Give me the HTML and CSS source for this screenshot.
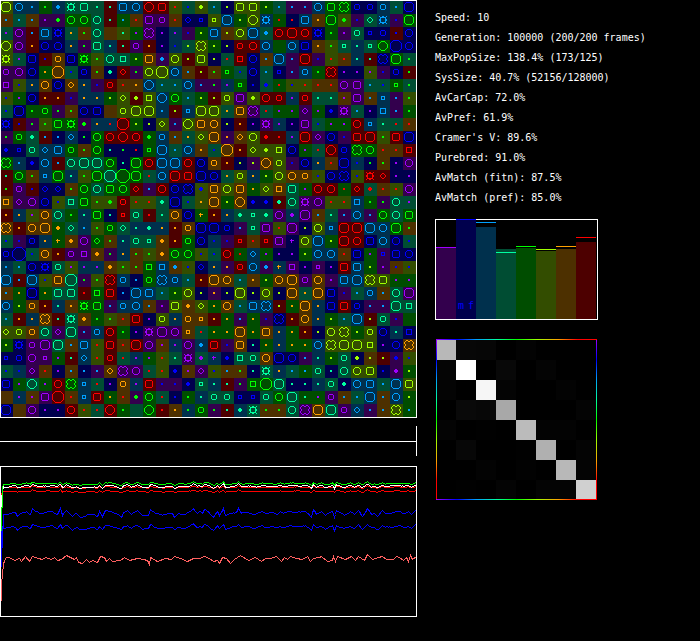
FILE: index.html
```html
<!DOCTYPE html>
<html lang="en">
<head>
<meta charset="utf-8">
<title>Population simulation</title>
<link rel="stylesheet" href="styles.css">
</head>
<body>
<main class="app">
  <div class="world">
    <svg class="field" id="field" viewBox="0 0 417 418" role="img" aria-label="Population grid"></svg>
    <svg class="strip" viewBox="0 0 417 30" aria-hidden="true"><path d="M0 15.5H417M416.5 0V30"/></svg>
    <svg class="history" id="history" viewBox="0 0 417 151" role="img" aria-label="History"></svg>
  </div>
  <aside class="side">
    <ul class="stats">
      <li>Speed: 10</li>
      <li>Generation: 100000 (200/200 frames)</li>
      <li>MaxPopSize: 138.4% (173/125)</li>
      <li>SysSize: 40.7% (52156/128000)</li>
      <li>AvCarCap: 72.0%</li>
      <li>AvPref: 61.9%</li>
      <li>Cramer's V: 89.6%</li>
      <li>Purebred: 91.0%</li>
      <li>AvMatch (fitn): 87.5%</li>
      <li>AvMatch (pref): 85.0%</li>
    </ul>
    <div class="bars">
      <svg class="bars-plot" id="bars" viewBox="0 0 163 101" aria-hidden="true"></svg>
      <div class="sexes"><span>m</span><span>f</span></div>
    </div>
    <div class="matrix" id="matrix"></div>
  </aside>
</main>
<script src="main.js"></script>
</body>
</html>
```
FILE: styles.css
```css
* { box-sizing: border-box; }

body {
  margin: 0;
  background: #000;
  color: #fff;
  font: 10px/20px "DejaVu Sans Mono", "Liberation Mono", monospace;
}

.app {
  display: grid;
  grid-template-columns: 417fr 283fr;
  align-items: start;
}

.world { display: flex; flex-direction: column; }

svg { display: block; width: 100%; shape-rendering: crispEdges; }

.strip { margin: 8px 0 10px; stroke: #fff; }

.history path, .history rect { fill: none; }

.side { padding: 8px 0 0 18px; }

.stats {
  margin: 0 0 11px;
  padding: 0;
  list-style: none;
  white-space: nowrap;
}

.bars { position: relative; width: 163px; margin-bottom: 19px; }

.sexes {
  position: absolute;
  left: 21px;
  bottom: 4px;
  display: flex;
  color: #00f;
}

.sexes span { width: 10px; text-align: center; }

.matrix {
  --hues: #a000ff, #00f 13%, #00a0ff 25%, #00ffa0 38%, #0f0 50%, #a0ff00 63%, #ffa000 76%, #f00 88%;
  position: relative;
  display: grid;
  grid-template-columns: repeat(8, 20px);
  grid-auto-rows: 20px;
  width: 161px;
  margin-left: 1px;
  padding-top: 1px;
}

.matrix::after {
  content: "";
  position: absolute;
  inset: 0;
  background:
    linear-gradient(to right, var(--hues)) top / 100% 1px no-repeat,
    linear-gradient(to right, var(--hues)) bottom / 100% 1px no-repeat,
    linear-gradient(var(--hues)) left / 1px 100% no-repeat,
    linear-gradient(var(--hues)) right / 1px 100% no-repeat;
}
```
FILE: main.js
```js
const BRIGHT = { P: '#a000ff', B: '#0000ff', C: '#00a0ff', T: '#00ffa0', G: '#00ff00', L: '#a0ff00', O: '#ffa000', R: '#ff0000' };
const DARK = { P: '#33004d', B: '#00004d', C: '#00304d', T: '#004d33', G: '#004d00', L: '#334d00', O: '#4d3000', R: '#4d0000' };

// Each cell: background hue, organism hue, body shape.
const CELLS = `
LL7 CC5 CC1 GG1 CC2 TTw TTr TT1 RT1 CCr CC5 RRe RRr LR1 TB1 LL2 TC1 BL1 LLr LLr GL1 TC1 PC1 PC1 CC5 GGr GGv BB4 BB4 CC4 TC1 BB7
OC1 TC1 OC1 PP1 PG2 GG6 GG6 TT6 RT1 GC1 OR1 PPr PP4 OR1 BBd BBs LLs CC7 GL1 LLe CCw GR1 BR1 CCr OO1 GG7 LG2 PB1 TTd CCw PB1 GG7
TP1 PP6 RC1 CCr BBw TO1 OG1 TT6 O-0 LT1 GP1 PPv BP1 CP1 PB1 GL1 CCr OL1 LL6 CC7 TC2 RR6 RR7 RR6 BBw GG1 PP1 TT4 BBs BB4 RB1 BB5
LLe PP6 RO1 BB6 BB6 CO1 PG1 TTr CT1 RT1 PP4 RO1 BP1 CB1 TL1 LLv GL1 BL1 RR4 RR5 CC6 G-0 CC6 BBr OO1 LG1 TTs CT1 TTs GGe BB8 BB5
LLw TP1 BBr RB1 OO4 BBr GGw LG1 TT6 TTq GL1 OOr PC2 LL6 RL1 LLr BL1 TR1 RRq BB6 OC1 CC7 PC1 RR7 PB1 LR1 OR1 CT1 RT1 BBv GG7 TG1
PP4 PP5 BB6 GO1 OO8 TB1 BB4 OG1 BT2 RRd PG1 LL5 LL8 CC5 OC1 RL1 OG1 GGs TB1 BB6 TC1 BBs PC1 CC4 GG1 RRv BP1 BP1 LP1 PB1 BB4 RG1
PPq LB1 CO1 OO5 BB5 OOd CO1 PB1 RR4 OR1 OO1 CCe TC1 TC1 CC5 PC1 PG1 CP1 GGs BB1 TB2 GR1 LB1 LR1 OR1 OR1 PP6 PPr TC1 TB1 GGs TG1
LB1 GP1 BB5 RO1 RO1 PB1 CO1 CO1 GL1 LLd RL2 LLq CCe GG5 TC1 GL1 RL1 LL4 PPr LL2 RR5 RR4 CP1 RR4 TT1 TT1 OP1 PPr OC1 CCs PC1 LG1
TB1 BB7 GG1 GG4 PG1 OG1 BB6 BBr O-0 LL4 LL7 LL7 CC1 RL1 CCs LL7 LL7 TO1 OOr PPv TR1 GP1 GP1 PPd GP1 BB2 PPw TC1 BP1 CCq PC1 GG1
BBw RB1 PG1 LG1 GGr GGw PG2 CO1 CR1 RR8 GL1 BL1 LLd PC1 LLe OOr OO6 BL1 RO1 BP1 PPw CP1 BP1 PPr TB1 GP1 GP1 RR6 CCs TT1 TR1 OR1
PG1 GG4 TT2 RC1 BC1 CCd BG1 GG6 RR6 RRe RR6 GG2 CC4 OC1 TO1 LLd OO7 PO1 OOd LL6 RR2 RR1 CP1 RR7 PPd BB5 PB1 RRr RR7 LG1 RRr BB7
BB2 BBs TT4 CCd CCr GG4 OG1 GG6 BT1 BG1 BR1 GGs CC7 TC1 CC5 OO1 TB1 OO8 RO1 LLd LL2 LLq BB6 GP1 TR1 RRe BB4 GGv GG5 OR1 OR1 RRq
GGv CC1 BB2 CC6 RC1 TT5 TT7 TT7 GG6 BT1 GG7 RR5 CC7 CC7 RR6 BB6 OO4 RO1 BL1 PL1 OOe LL4 PB1 BB6 CO1 OR1 BB7 CB1 BG1 OG1 BP1 PP6
RT1 GG5 OG1 CCs GG7 CT1 LG1 GG7 TT8 GG9 GG7 TR1 CC6 RR7 RRr BB7 BB6 TO1 LL4 CO1 GL1 LL5 OO6 OO4 LB1 BB6 BBv LB1 RRw RRd BP1 BP1
RG1 PP4 RB1 BBd BBd OG1 GG6 TT6 GGr GG5 RRd PC1 RR5 BB6 BBv LB2 OOr LL6 OOr GO1 LLd OOq TTr GP1 RR6 RR6 GR1 RRd TR2 OR1 LR1 PP6
OOq PPd PP5 BB5 LB1 TTq GGr LG1 LG2 RR4 LR1 LR1 TT2 BB7 TB1 LO1 OO7 GL1 OOe BB2 BB2 RT2 TT6 PPw PP6 LR1 LR1 CCq GG1 PG1 TT5 TP1
RO1 CO1 LP1 OO6 TT5 GG1 CT1 GGr BT1 RRs TT4 RR1 TT1 OO6 BB5 GO+ RO1 CO1 TT2 TTs TT2 PP5 CP2 PP7 OC1 TT1 PC1 CC6 PC1 GG6 TT6 GGr
OOv RO1 OO6 OO7 GO2 TTd CC1 LG1 GG4 TTd CT1 CT2 CO1 RO1 OO4 BB7 BB7 BB4 PC1 TTs PPr LR1 PP7 BL1 LL6 CCs RR7 RR7 CC7 CC5 GG7 OG1
TB1 PB1 BB4 CO1 GO+ OO2 PP5 GGd OG1 CT1 TT4 TTs OO2 RO1 GG4 BB5 CB1 PB1 RRs OR1 RRs PPr BP+ LL6 CC7 GL1 RR7 RR6 BBr CC5 BB6 TB1
BB4 BB9 TB1 OO6 RO1 PP4 PPq OO2 PG1 CO1 OG1 LG1 OO2 GG5 GG5 LB1 TB1 RR5 GR1 CCd GP1 BP1 BP1 GL1 CC6 CC6 OR1 BBr GP1 PBs BBr BB6
CC1 TC1 BB6 BBw TT4 LP1 CP1 CP1 OO2 LG1 OG1 GGq CCq OC2 LB1 BBd CO1 PO1 RR4 CC5 PC2 CO+ PPq BP1 PPs BP1 RRr CCr GL1 PP1 OB1 LB1
CC7 RC1 CC7 LB1 OOr TT8 PG1 LG1 RRv CC4 BC1 GG4 CCv CC4 TC1 RO1 OO7 OO6 TC1 OO1 GL1 OO5 OO7 PP4 OO5 PP1 CCr CC7 LLv LLr GP1 GP1
OC1 GO1 BB7 GO1 TTr TTr RR1 GGq RRr BC1 CC7 CCr TC1 GL1 LL5 BL1 PO1 BL1 LL7 BL1 LL5 BL1 OO7 TO1 OO7 BBr PB1 TC1 CC4 OC1 TT5 PP7
CC5 GL1 OO4 RO1 CT1 OO1 GGw GGr PC1 CC4 CC6 OC1 PP1 LLr OO2 LLd GO1 OO6 TC1 CCr CCv RL1 GO1 OO7 CO1 BBr RRr BB4 PC1 PC1 TT7 TTq
TC1 RO1 CO1 OOv RT1 TTw OO2 GG1 LG1 OR1 RRr BP1 LL4 CO1 OO4 OOs RO1 GO1 PC1 GO1 PB1 BBv RO1 OO6 CO1 GL1 TC1 CC7 RL1 TT4 PB1 G-0
LLd LL4 OO4 TT6 PPd TT7 PC1 CC4 RR6 GG1 BP1 PPw PP7 PP5 OOs TR1 GO1 GO1 OO7 GO1 OOr CO1 GO1 RO1 BL1 LL6 LLv GL1 LL4 BB5 CT1 BBq
GL1 BBw PP4 PP7 TT7 OC1 CCr LR1 RRr OR1 RR7 PP6 OP1 CP1 PP5 CC2 RRr PB1 OOr BT1 GO1 CO1 GO1 GO1 CC5 LLv LL7 LL7 LLq BP1 BB6 OOv
BBs BB4 PP6 PPs GP1 RT1 CCd LR1 RR4 TR1 CP1 GP1 LR1 TT1 PPw TP2 CP+ BB2 TTq TT4 OO6 BB7 BB6 PC1 CT1 GL1 TT4 BL2 OL1 RL1 PB2 LB1
TB1 CB1 PPd OR1 BP1 OC1 BC1 PC1 OOd PPv PP6 TR1 LR1 BB2 OP1 PPd LB1 OC1 OG1 BT1 TTw CO1 TC1 GC1 TT4 BT1 TT5 LL5 LLr BB1 PP2 GL1
BBr GP1 TTe GP1 RR6 GGv CCs TR1 BP1 OO4 CP1 RRr PB1 PB1 BB2 TTs CT1 RT1 PG1 GGq GG8 TT7 BT1 BT1 CT1 TT4 BT2 CC5 CCr TC1 CC7 LLr
O-0 CP1 OP1 PPr RR8 OR1 CCs RRr GO1 OR1 PG2 GG5 TR1 BB1 GG1 CT1 TT4 TT4 BBs BBs TT4 GG6 TT7 GT1 GP1 PP4 OC1 TC1 CC7 OC1 CC6 GL1
BB7 O-0 PP6 BP1 BP1 RR6 LR1 TR1 RRe GG1 T-0 GGe RR1 OO1 CG1 GG4 PG1 RT1 CT2 TTw OG1 OG1 TT5 PPv OO7 TT7 PP4 CCd PC1 OC1 LLv GC1`
  .trim().split('\n').map(r => r.split(' '));

// Outlined bodies: [half width, corner cut]
const BODY = {
  s: [1.5, 0], q: [2.5, 0], r: [3.5, 1], d: [2.5, 2], e: [4.5, 3], w: [2.5, 0],
  4: [2.5, 1], 5: [3.5, 2], 6: [3.5, 2], 7: [4.5, 2], 8: [5.5, 3], 9: [6.5, 4]
};

function body(shape, x, y, color) {
  if (shape === '0') return '';
  if (shape === '1') return `<rect x="${x - 1}" y="${y - 1}" width="2" height="2" fill="${color}"/>`;
  if (shape === '2') return `<path d="M${x - 1} ${y - 2}h2v1h1v2h-1v1h-2v-1h-1v-2h1z" fill="${color}"/>`;
  if (shape === '+') return `<path d="M${x - 1} ${y - 2}h1v1h2v1h-2v2h-1v-2h-1v-1h1z" fill="${color}"/>`;
  if (shape === 'v') {
    const d = `M${x - 2.5} ${y - 4.5}h1l1 1h1l1 -1h1l2 2v1l-1 1v1l1 1v1l-2 2h-1l-1 -1h-1l-1 1h-1l-2 -2v-1l1 -1v-1l-1 -1v-1z`;
    return `<path d="${d}" fill="none" stroke="${color}"/>`;
  }
  const [r, c] = BODY[shape];
  const s = 2 * (r - c);
  let d = `M${x - r + c} ${y - r}h${s}l${c} ${c}v${s}l${-c} ${c}h${-s}l${-c} ${-c}v${-s}z`;
  if (shape === 'w') {
    d += `M${x - 1} ${y - 3.5}h2M${x - 1} ${y + 3.5}h2M${x - 3.5} ${y - 1}v2M${x + 3.5} ${y - 1}v2`;
    d += `M${x - 4} ${y - 3.5}h1M${x + 3} ${y - 3.5}h1M${x - 4} ${y + 3.5}h1M${x + 3} ${y + 3.5}h1`;
  }
  return `<path d="${d}" fill="none" stroke="${color}"/>`;
}

let field = '';
CELLS.forEach((row, j) => row.forEach((c, i) => {
  field += `<rect x="${i * 13}" y="${j * 13 + 1}" width="13" height="13" fill="${DARK[c[0]]}"/>`;
  field += body(c[2], i * 13 + 6, j * 13 + 7, BRIGHT[c[1]]);
}));
field += '<rect x=".5" y=".5" width="416" height="417" fill="none" stroke="#fff"/>';
document.getElementById('field').innerHTML = field;

// History traces as x,y pairs; the upper traces share one variation.
const WAVE = [3,514,8,514,12,512,15,512,17,516,21,513,26,511,30,514,32,508,35,511,40,513,45,512,52,511,57,514,60,508,62,515,66,510,72,516,76,513,80,517,88,514,94,514,97,516,99,511,102,516,105,510,111,511,117,514,121,517,123,512,127,510,131,514,137,510,142,515,148,515,150,509,156,513,162,515,167,513,172,513,174,517,178,513,184,514,190,511,193,508,197,513,199,511,202,513,204,509,208,511,213,517,217,511,219,515,223,508,225,515,231,513,236,512,238,508,241,513,248,512,255,514,262,511,266,513,271,512,276,514,280,511,283,513,290,511,300,512,305,511,308,513,311,517,313,509,316,514,321,511,325,515,332,511,334,517,336,510,344,515,350,511,354,514,358,510,362,516,367,508,371,514,374,513,377,516,382,510,385,513,392,512,399,511,404,513,408,511,411,514,416,509];
const LOW = [1,600,1,585,2,573,3,564,4,560,6,557,9,557,14,560,19,558,21,561,25,556,29,561,32,556,38,558,42,559,45,557,51,559,54,557,57,560,61,559,66,555,70,557,74,559,76,557,78,562,82,563,86,559,89,562,92,560,97,562,100,556,104,557,106,561,109,558,112,561,120,560,124,557,129,560,137,558,143,559,147,560,149,564,150,557,157,561,165,558,171,559,174,556,180,558,187,561,193,558,199,558,204,556,209,558,213,561,217,560,219,563,222,557,226,558,230,563,234,559,240,555,248,560,255,557,261,561,265,558,270,558,276,556,281,561,284,557,287,559,290,556,296,558,302,559,307,556,310,561,313,558,319,557,321,556,327,561,332,560,333,556,335,561,337,556,345,559,351,556,355,560,358,556,364,560,367,554,372,559,378,557,382,556,386,559,393,559,396,556,399,557,403,560,406,557,408,561,410,555,412,559,416,556];

function fineWave(base, scale, ripple, seed) {
  let d = '';
  let k = 0;
  for (let x = 3; x <= 416; x++) {
    while (k < WAVE.length - 4 && WAVE[k + 2] < x) k += 2;
    const t = (x - WAVE[k]) / (WAVE[k + 2] - WAVE[k]);
    const y = WAVE[k + 1] + t * (WAVE[k + 3] - WAVE[k + 1]) - 513;
    const r = Math.sin((x >> 1) * .9 + seed) * ripple;
    d += `L${x + .5} ${Math.round(base + y * scale + r) - 466 + .5}`;
  }
  return d;
}

let low = 'M';
for (let i = 0; i < LOW.length; i += 2) low += `${LOW[i] + .5} ${LOW[i + 1] - 465.5} `;
const trace = (d, color) => `<path d="${d}" stroke="${color}"/>`;
document.getElementById('history').innerHTML =
  trace(low, '#ff6060') +
  trace('M1.5 101V70L2.5 60' + fineWave(527, .7, .5, 1), '#00f') +
  trace('M1.5 101V90L2.5 75' + fineWave(513, 1, .5, 2), '#00f') +
  trace('M1.5 45V30L2.5 27' + fineWave(491, .3, .2, 3), '#f00') +
  trace('M1.5 45V30L2.5 24' + fineWave(487, .3, .2, 3), '#f00') +
  trace('M1.5 41V34L2.5 25' + fineWave(486, .5, .3, 5), '#fff') +
  trace('M1.5 65V41H2.5V22' + fineWave(483.4, .4, .3, 5), '#0f0') +
  '<rect x=".5" y=".5" width="416" height="150" stroke="#fff"/>';

// Bars: hue, top of the body, position of the marker line
const BARS = [['P', 29, 28], ['B', 1, 0], ['C', 8, 3], ['T', 30, 33], ['G', 29, 27], ['L', 32, 30], ['O', 30, 27], ['R', 23, 18]];
document.getElementById('bars').innerHTML = '<rect x=".5" y=".5" width="162" height="100" fill="none" stroke="#fff"/>' +
  BARS.map(([h, top, mark], i) =>
    `<rect x="${1 + i * 20}" y="${top}" width="20" height="${100 - top}" fill="${DARK[h]}"/>` +
    `<rect x="${1 + i * 20}" y="${mark}" width="20" height="1" fill="${BRIGHT[h]}"/>`).join('');

const MATRIX = [
  184, 7, 6, 0, 3, 0, 0, 0,
  5, 255, 0, 8, 0, 4, 0, 0,
  4, 0, 246, 4, 0, 0, 3, 0,
  0, 9, 7, 168, 0, 0, 0, 4,
  4, 0, 1, 0, 187, 3, 3, 0,
  0, 7, 0, 0, 1, 176, 0, 4,
  0, 0, 3, 0, 2, 0, 184, 4,
  0, 1, 0, 4, 0, 4, 4, 208
];
document.getElementById('matrix').innerHTML =
  MATRIX.map(v => `<span style="background:rgb(${v},${v},${v})"></span>`).join('');
```
